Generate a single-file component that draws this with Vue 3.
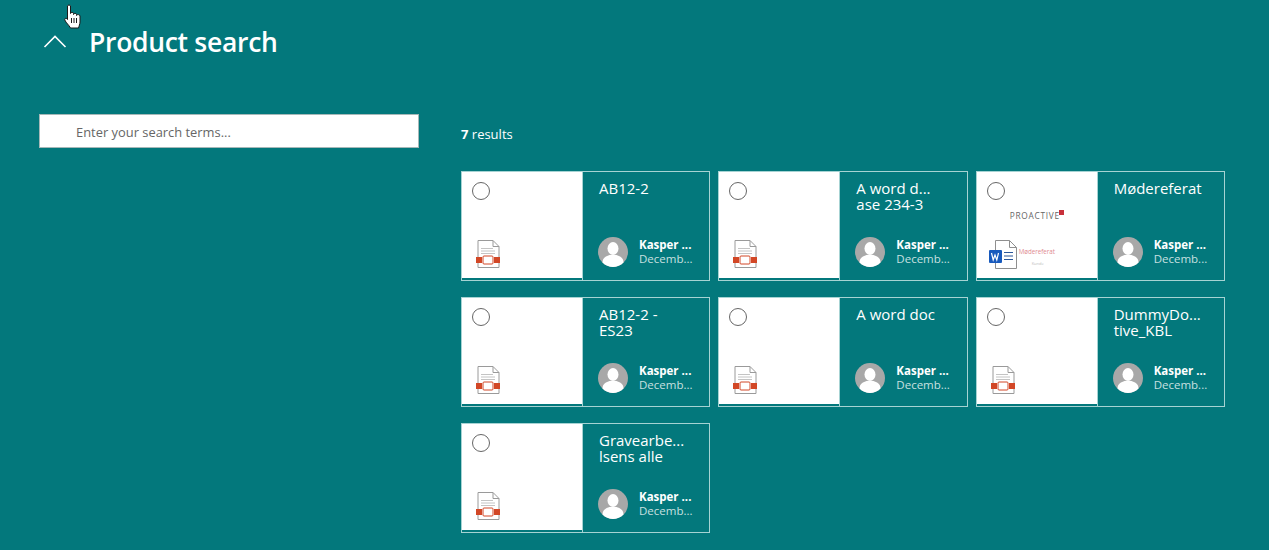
<template>
  <div class="page">
    <svg class="cursor" width="18" height="25" viewBox="0 0 18 25">
      <path d="M3.500 2C3.500.7 6.500.7 6.500 2v7.500c.5-1.500 3-1.500 3 0v1c.5-1.500 3-1.500 3 0v1c.5-1.500 3.500-1 3.500.5v6c0 2-1 4-1.500 6h-8C5 21 2 19 .8 16c-.5-1.500 1.500-2.500 2.700-.5z" fill="#fff" stroke="#1a1a1a" stroke-width="1" />
      <path d="M7.500 14v5M10 14v5M12.500 14v5" stroke="#1a1a1a" stroke-width="1" fill="none" />
    </svg>

    <header class="head">
      <svg class="chevron" width="24" height="14" viewBox="0 0 24 14">
        <path d="M1.500 13 12 2.500 22.500 13" fill="none" stroke="#fff" stroke-width="1.600" />
      </svg>
      <h1 class="title">Product search</h1>
    </header>

    <main class="body">
      <aside class="side">
        <div class="search">Enter your search terms...</div>
      </aside>
      <section class="results">
        <div class="count"><b>7</b> results</div>
        <div class="grid">
          <article v-for="card in cards" :key="card.lines[0]" class="card">
            <div class="thumb">
              <span class="check"></span>
              <template v-if="card.word">
                <div class="logo">
                  <span class="logo-text">PROACTIVE</span>
                  <span class="logo-mark"></span>
                </div>
                <div class="doc-title">Mødereferat</div>
                <div class="doc-sub">Kunde</div>
                <svg class="file word" width="30" height="29" viewBox="0 0 30 29">
                  <path d="M6.500.5h14l7 7v21h-21z" fill="#fff" stroke="#8f8f8f" />
                  <path d="M20.500.5v7h7" fill="none" stroke="#8f8f8f" />
                  <rect x="0" y="10" width="13" height="13" rx="1" fill="#185abd" />
                  <path d="M2.500 13l1.700 7 1.800-5 1.800 5 1.700-7" fill="none" stroke="#fff" stroke-width="1.200" />
                  <path d="M15 12.500h9M15 16h9M15 19.500h9" stroke="#2b579a" stroke-width="1.200" />
                </svg>
              </template>
              <svg v-else class="file" width="24" height="28" viewBox="0 0 24 28">
                <path d="M2 .5h15l6 6v21H2z" fill="#fff" stroke="#9a9a9a" />
                <path d="M17 .5v6h6" fill="none" stroke="#9a9a9a" />
                <path d="M5 8.500h12M5 11h14M5 13.500h14" stroke="#c4c4c4" />
                <rect x="0" y="17" width="6" height="6" fill="#d24726" />
                <rect x="18" y="17" width="6" height="6" fill="#d24726" />
                <rect x="7" y="16" width="10" height="8" rx="1" fill="#fff" stroke="#d24726" />
              </svg>
            </div>
            <div class="info">
              <div class="name">
                <div v-for="line in card.lines" :key="line">{{ line }}</div>
              </div>
              <div class="author">
                <svg class="avatar" width="30" height="30" viewBox="0 0 30 30">
                  <circle cx="15" cy="15" r="15" fill="#a8a8a8" />
                  <ellipse cx="15" cy="11.500" rx="5.500" ry="6.500" fill="#fff" />
                  <path d="M4.500 25.500c0-5 4-6.500 7-7.500h7c3 1 7 2.500 7 7.500A15 15 0 0 1 15 30a15 15 0 0 1-10.500-4.500z" fill="#fff" />
                </svg>
                <div class="meta">
                  <div class="who">Kasper ...</div>
                  <div class="when">Decemb...</div>
                </div>
              </div>
            </div>
          </article>
        </div>
      </section>
    </main>
  </div>
</template>

<script setup>
const cards = [
  { lines: ['AB12-2'] },
  { lines: ['A word d...', 'ase 234-3'] },
  { lines: ['Mødereferat'], word: true },
  { lines: ['AB12-2 -', 'ES23'] },
  { lines: ['A word doc'] },
  { lines: ['DummyDo...', 'tive_KBL'] },
  { lines: ['Gravearbe...', 'lsens alle'] }
]
</script>

<style>
html, body {
  margin: 0;
  background: #03787c;
}
</style>

<style scoped>
.page {
  position: relative;
  height: 550px;
  overflow: hidden;
  background: #03787c;
  color: #fff;
  font-family: "Open Sans", "Noto Sans", sans-serif;
}

.cursor {
  position: absolute;
  left: 64px;
  top: 4px;
}

.head {
  display: flex;
  align-items: center;
  height: 40px;
  padding: 22px 0 0 43px;
}

.chevron {
  margin-right: 22px;
  margin-top: -3px;
}

.title {
  margin: 0;
  font-size: 26.500px;
  font-weight: 600;
  letter-spacing: -0.3px;
}

.body {
  display: flex;
  padding: 52px 0 0 39px;
}

.side {
  width: 380px;
  margin-right: 42px;
}

.search {
  box-sizing: border-box;
  height: 34px;
  padding-left: 36px;
  background: #fff;
  border: 1px solid #a6b8b8;
  color: #666;
  font-size: 12.900px;
  line-height: 34px;
}

.results {
  width: 764px;
}

.count {
  height: 57px;
  padding-top: 12px;
  box-sizing: border-box;
  font-size: 13px;
  line-height: 16px;
}

.grid {
  display: grid;
  grid-template-columns: repeat(3, 249.330px);
  grid-auto-rows: 110px;
  gap: 16px 8px;
}

.card {
  box-sizing: border-box;
  display: flex;
  padding-bottom: 2px;
  border: 1px solid #a6d3d3;
}

.thumb {
  position: relative;
  width: 120px;
  background: #fff;
  flex: none;
}

.check {
  position: absolute;
  left: 10px;
  top: 10px;
  box-sizing: border-box;
  width: 18px;
  height: 18px;
  border: 1px solid #666;
  border-radius: 50%;
}

.file {
  position: absolute;
  left: 14px;
  bottom: 10px;
}

.file.word {
  left: 12px;
  bottom: 9px;
}

.logo {
  position: absolute;
  left: 33px;
  top: 39px;
  color: #666;
  font-size: 8.300px;
  line-height: 10px;
  letter-spacing: 0.75px;
}

.logo-mark {
  position: absolute;
  right: -4px;
  top: -1px;
  width: 5px;
  height: 5px;
  background: #c8303a;
}

.doc-title {
  position: absolute;
  left: 42px;
  top: 75px;
  color: #e08a90;
  font-size: 6.200px;
  line-height: 10px;
}

.doc-sub {
  position: absolute;
  left: 55px;
  top: 89px;
  color: #bbb;
  font-size: 4px;
  line-height: 6px;
}

.info {
  flex: 1;
  min-width: 0;
  display: flex;
  flex-direction: column;
  justify-content: space-between;
  margin-bottom: -2px;
  padding: 8px 0 13px 16px;
  border-left: 1px solid #a6d3d3;
}

.name {
  font-size: 15px;
  line-height: 16px;
}

.author {
  display: flex;
  align-items: center;
  margin-left: -1px;
}

.avatar {
  flex: none;
  margin-right: 11px;
}

.meta {
  font-size: 11.500px;
  line-height: 14px;
  margin-top: -1px;
}

.who {
  font-weight: 700;
}

.when {
  color: #c8e0e0;
}
</style>
